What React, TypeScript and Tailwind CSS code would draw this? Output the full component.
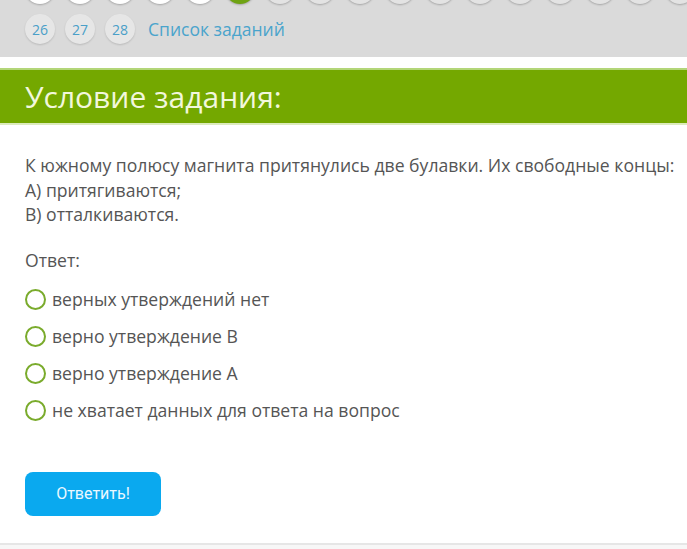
import React from 'react';

const topRow = Array.from({ length: 17 }, (_, i) => i + 9);
const options = [
  'верных утверждений нет',
  'верно утверждение В',
  'верно утверждение А',
  'не хватает данных для ответа на вопрос',
];

export default function App() {
  return (
    <div className="w-[687px] h-[549px] overflow-hidden bg-white font-['Open_Sans',sans-serif]">
      {/* task navigation */}
      <div className="h-[57px] overflow-hidden bg-[#dadada] pl-[25px]">
        <div className="flex gap-[10px] mt-[-26px] w-[800px]">
          {topRow.map((n, i) => (
            <div
              key={n}
              className={
                'w-[30px] h-[30px] shrink-0 rounded-full shadow-[0_1px_2px_rgba(0,0,0,0.25)] ' +
                (i < 5 ? 'bg-white' : i === 5 ? 'bg-[#6fa313]' : 'bg-[#e3e3e3]')
              }
            />
          ))}
        </div>
        <div className="flex items-center gap-[10px] mt-[10px]">
          {[26, 27, 28].map((n) => (
            <div
              key={n}
              className="w-[30px] h-[30px] rounded-full bg-[#e6e6e6] flex items-center justify-center text-[14px] text-[#4a9fc8] shadow-[0_1px_2px_rgba(0,0,0,0.15)]"
            >
              {n}
            </div>
          ))}
          <span className="ml-[3px] text-[17.5px] text-[#4aa4cc]">Список заданий</span>
        </div>
      </div>

      <div className="h-[11px] bg-white" />

      {/* header */}
      <div className="h-[57px] bg-[#74a800] border-t-2 border-b-2 border-t-[#b3d678] border-b-[#dcebbd] flex items-center pl-[25px]">
        <h1 className="text-[30px] text-[#f2f7dc] leading-none">Условие задания:</h1>
      </div>

      {/* task body */}
      <div className="pl-[25px] pt-[28px] text-[#555]">
        <div className="leading-[24.5px] text-[17.6px]">
          <p>К южному полюсу магнита притянулись две булавки. Их свободные концы:</p>
          <p>А) притягиваются;</p>
          <p>В) отталкиваются.</p>
        </div>
        <p className="mt-[21px] leading-[24px] text-[17.6px]">Ответ:</p>
        <div className="mt-[16px] flex flex-col gap-[13px]">
          {options.map((o) => (
            <label key={o} className="flex items-center gap-[6px] h-[24px]">
              <span className="w-[21px] h-[21px] rounded-full border-[2.5px] border-[#7aab2c] bg-white" />
              <span className="text-[17.6px] text-[#555]">{o}</span>
            </label>
          ))}
        </div>
        <button className="mt-[49px] w-[136px] h-[44px] rounded-[8px] bg-[#0aa9ef] text-[#eaf8ff] text-[16px] font-['Roboto',sans-serif]">
          Ответить!
        </button>
      </div>

      <div className="mt-[27px] h-[10px] border-t-2 border-[#e6e6e6] bg-[#f7f7f7]" />
    </div>
  );
}
